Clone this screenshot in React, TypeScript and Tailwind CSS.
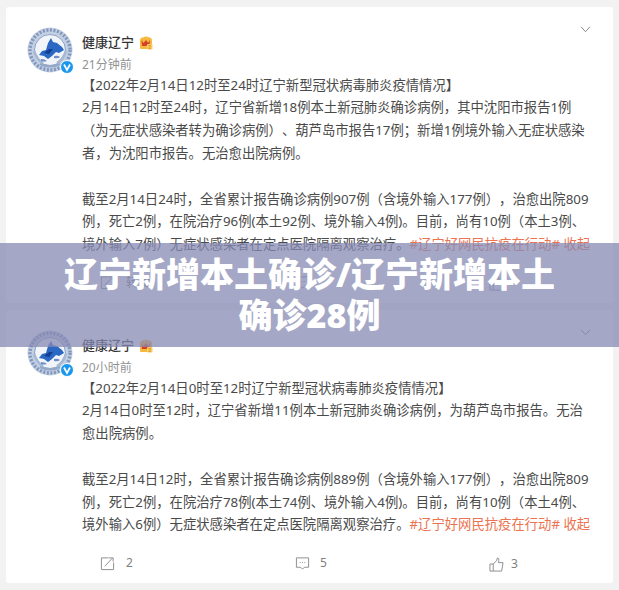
const lineClass = "whitespace-nowrap h-[22.8px] leading-[22.8px] [text-spacing-trim:space-all]";

function Avatar() {
  return (
    <div className="relative w-[46px] h-[46px] shrink-0">
      <svg viewBox="0 0 46 46" className="w-[46px] h-[46px]">
        <circle cx="23" cy="23" r="22.5" fill="#c3cfe2" />
        <circle cx="23" cy="23" r="20" fill="none" stroke="#8297bd" strokeWidth="3.4" strokeDasharray="2 1.6" />
        <circle cx="23" cy="23" r="15.5" fill="#f1f4f9" stroke="#8ea3c6" strokeWidth="1" />
        <path d="M7 24 Q10 33 16 36 M39 24 Q36 33 30 36" fill="none" stroke="#a7b8d4" strokeWidth="2.5" />
        <path d="M12 28 L15 24 L19 23 L21 16 L24 11 L26 15 L30 16 L35 20 L37 23 L32 26 L29 25 L25 29 L21 32 L17 29 Z" fill="#2a68c4" />
        <path d="M17 26 L22 22 L26 22 L22 27Z" fill="#123f94" />
        <path d="M27 29 Q31 28 33 30 Q31 32 27 31Z M14 32 Q18 32 20 34 Q17 35 14 34Z" fill="#6f8fc6" />
        <path d="M13 37 Q23 42 33 37" fill="none" stroke="#93a7c9" strokeWidth="2" />
      </svg>
      <div className="absolute right-[-1px] bottom-[-1px] w-[14px] h-[14px] rounded-full bg-[#1b98ee] border border-white flex items-center justify-center">
        <svg viewBox="0 0 10 10" className="w-[10px] h-[10px]">
          <path d="M2 2.5 L5 8 L8 2.5" fill="none" stroke="#fff" strokeWidth="1.7" />
        </svg>
      </div>
    </div>
  );
}

function Crown() {
  return (
    <svg viewBox="0 0 14 14" className="w-[14px] h-[14px] ml-[5px]">
      <path d="M1 5 Q1 1 4 1.5 Q7 -0.5 10 1.5 Q13 1 13 5 L13 12 Q13 13 12 13 L2 13 Q1 13 1 12Z" fill="#f6b93d" />
      <path d="M2.5 4 L4.5 7 L7 4 L7 10 L3 10Z" fill="#d8402a" />
      <path d="M7 4 L9 7 L11 4 L10.5 8 L7 10Z" fill="#c93c2a" />
      <rect x="8" y="8" width="5.5" height="5.5" rx="1" fill="#f8cd63" />
      <path d="M9.5 9.5 H12 M9.5 11 H12 M9.5 12.5 H12" stroke="#d98a1f" strokeWidth="0.7" />
    </svg>
  );
}

function Post({ time, lines, lastLine, share, comment, like }: { time: string; lines: string[]; lastLine: string; share: string; comment: string; like: string }) {
  return (
    <div className="bg-white rounded-[3px]">
      <div className="flex pl-[21px] pr-[22px] pt-[20px]">
        <Avatar />
        <div className="ml-[9px] flex-1">
          <div className="flex items-center h-[22px] mt-[5px] text-[13px] font-medium text-[#333]">
            健康辽宁
            <Crown />
          </div>
          <div className="text-[12px] leading-[16px] text-[#939393] mt-[3px]">{time}</div>
        </div>
        <svg viewBox="0 0 12 8" className="w-[11px] h-[7px] mt-[-1px]">
          <path d="M1 1 L6 6.5 L11 1" fill="none" stroke="#777" strokeWidth="1" />
        </svg>
      </div>
      <div className="pl-[76px] text-[13.33px] text-[#4a4a4a] mt-[0.6px]">
        {lines.map((line, i) => (
          <div key={i} className={lineClass}>{line}</div>
        ))}
        <div className={lineClass}>
          {lastLine}
          <span className="text-[#eb7350]">#辽宁好网民抗疫在行动# 收起</span>
        </div>
      </div>
      <div className="flex h-[47px] pt-[17px] pl-[94px] text-[12px] leading-[20px] text-[#808080]">
        <div className="flex items-center h-[20px] gap-[11px] w-[195px]">
          <svg viewBox="0 0 16 16" className="w-[15px] h-[15px]" fill="none" stroke="#8a8a8a" strokeWidth="1">
            <path d="M9 2 H1.5 V14.5 H14.5 V7" />
            <path d="M5 11 L13 2.5 M9.5 2 H14 V6" />
          </svg>
          {share}
        </div>
        <div className="flex items-center h-[20px] gap-[10px] w-[194px]">
          <svg viewBox="0 0 16 16" className="w-[15px] h-[15px]" fill="none" stroke="#8a8a8a" strokeWidth="1">
            <path d="M1.5 2 H14.5 V12 H10 L8 14 L6 12 H1.5 Z" />
            <path d="M5 7 H6 M7.5 7 H8.5 M10 7 H11" />
          </svg>
          {comment}
        </div>
        <div className="flex items-center h-[20px] gap-[7px] mt-[1px]">
          <svg viewBox="0 0 16 16" className="w-[15px] h-[15px]" fill="none" stroke="#8a8a8a" strokeWidth="1">
            <path d="M1 7.5 H4.5 V15 H1 Z" />
            <path d="M4.5 7.5 L8 4 L9 1 Q11 1 10.5 4 L10 6 H15 L13.5 15 H4.5" />
          </svg>
          {like}
        </div>
      </div>
    </div>
  );
}

export default function App() {
  return (
    <div className="relative w-[619px] h-[590px] overflow-hidden bg-[#f2f2f2] px-[6px] pt-[7px] font-['Noto_Sans','Noto_Sans_CJK_SC',sans-serif]">
      <div className="flex flex-col gap-[7px]">
        <Post
          time="21分钟前"
          lines={[
            "【2022年2月14日12时至24时辽宁新型冠状病毒肺炎疫情情况】",
            "2月14日12时至24时，辽宁省新增18例本土新冠肺炎确诊病例，其中沈阳市报告1例",
            "（为无症状感染者转为确诊病例）、葫芦岛市报告17例；新增1例境外输入无症状感染",
            "者，为沈阳市报告。无治愈出院病例。",
            "\u00a0",
            "截至2月14日24时，全省累计报告确诊病例907例（含境外输入177例），治愈出院809",
            "例，死亡2例，在院治疗96例(本土92例、境外输入4例)。目前，尚有10例（本土3例、",
          ]}
          lastLine="境外输入7例）无症状感染者在定点医院隔离观察治疗。"
          share="转发"
          comment=""
          like=""
        />
        <Post
          time="20小时前"
          lines={[
            "【2022年2月14日0时至12时辽宁新型冠状病毒肺炎疫情情况】",
            "2月14日0时至12时，辽宁省新增11例本土新冠肺炎确诊病例，为葫芦岛市报告。无治",
            "愈出院病例。",
            "\u00a0",
            "截至2月14日12时，全省累计报告确诊病例889例（含境外输入177例），治愈出院809",
            "例，死亡2例，在院治疗78例(本土74例、境外输入4例)。目前，尚有10例（本土4例、",
          ]}
          lastLine="境外输入6例）无症状感染者在定点医院隔离观察治疗。"
          share="2"
          comment="5"
          like="3"
        />
      </div>
      <div className="absolute left-0 right-0 top-[243px] h-[104px] bg-[#8789b3]/75 flex items-center justify-center text-center px-[60px]">
        <h1 className="text-white font-black text-[34px] leading-[41px] m-0">辽宁新增本土确诊/辽宁新增本土确诊28例</h1>
      </div>
    </div>
  );
}
